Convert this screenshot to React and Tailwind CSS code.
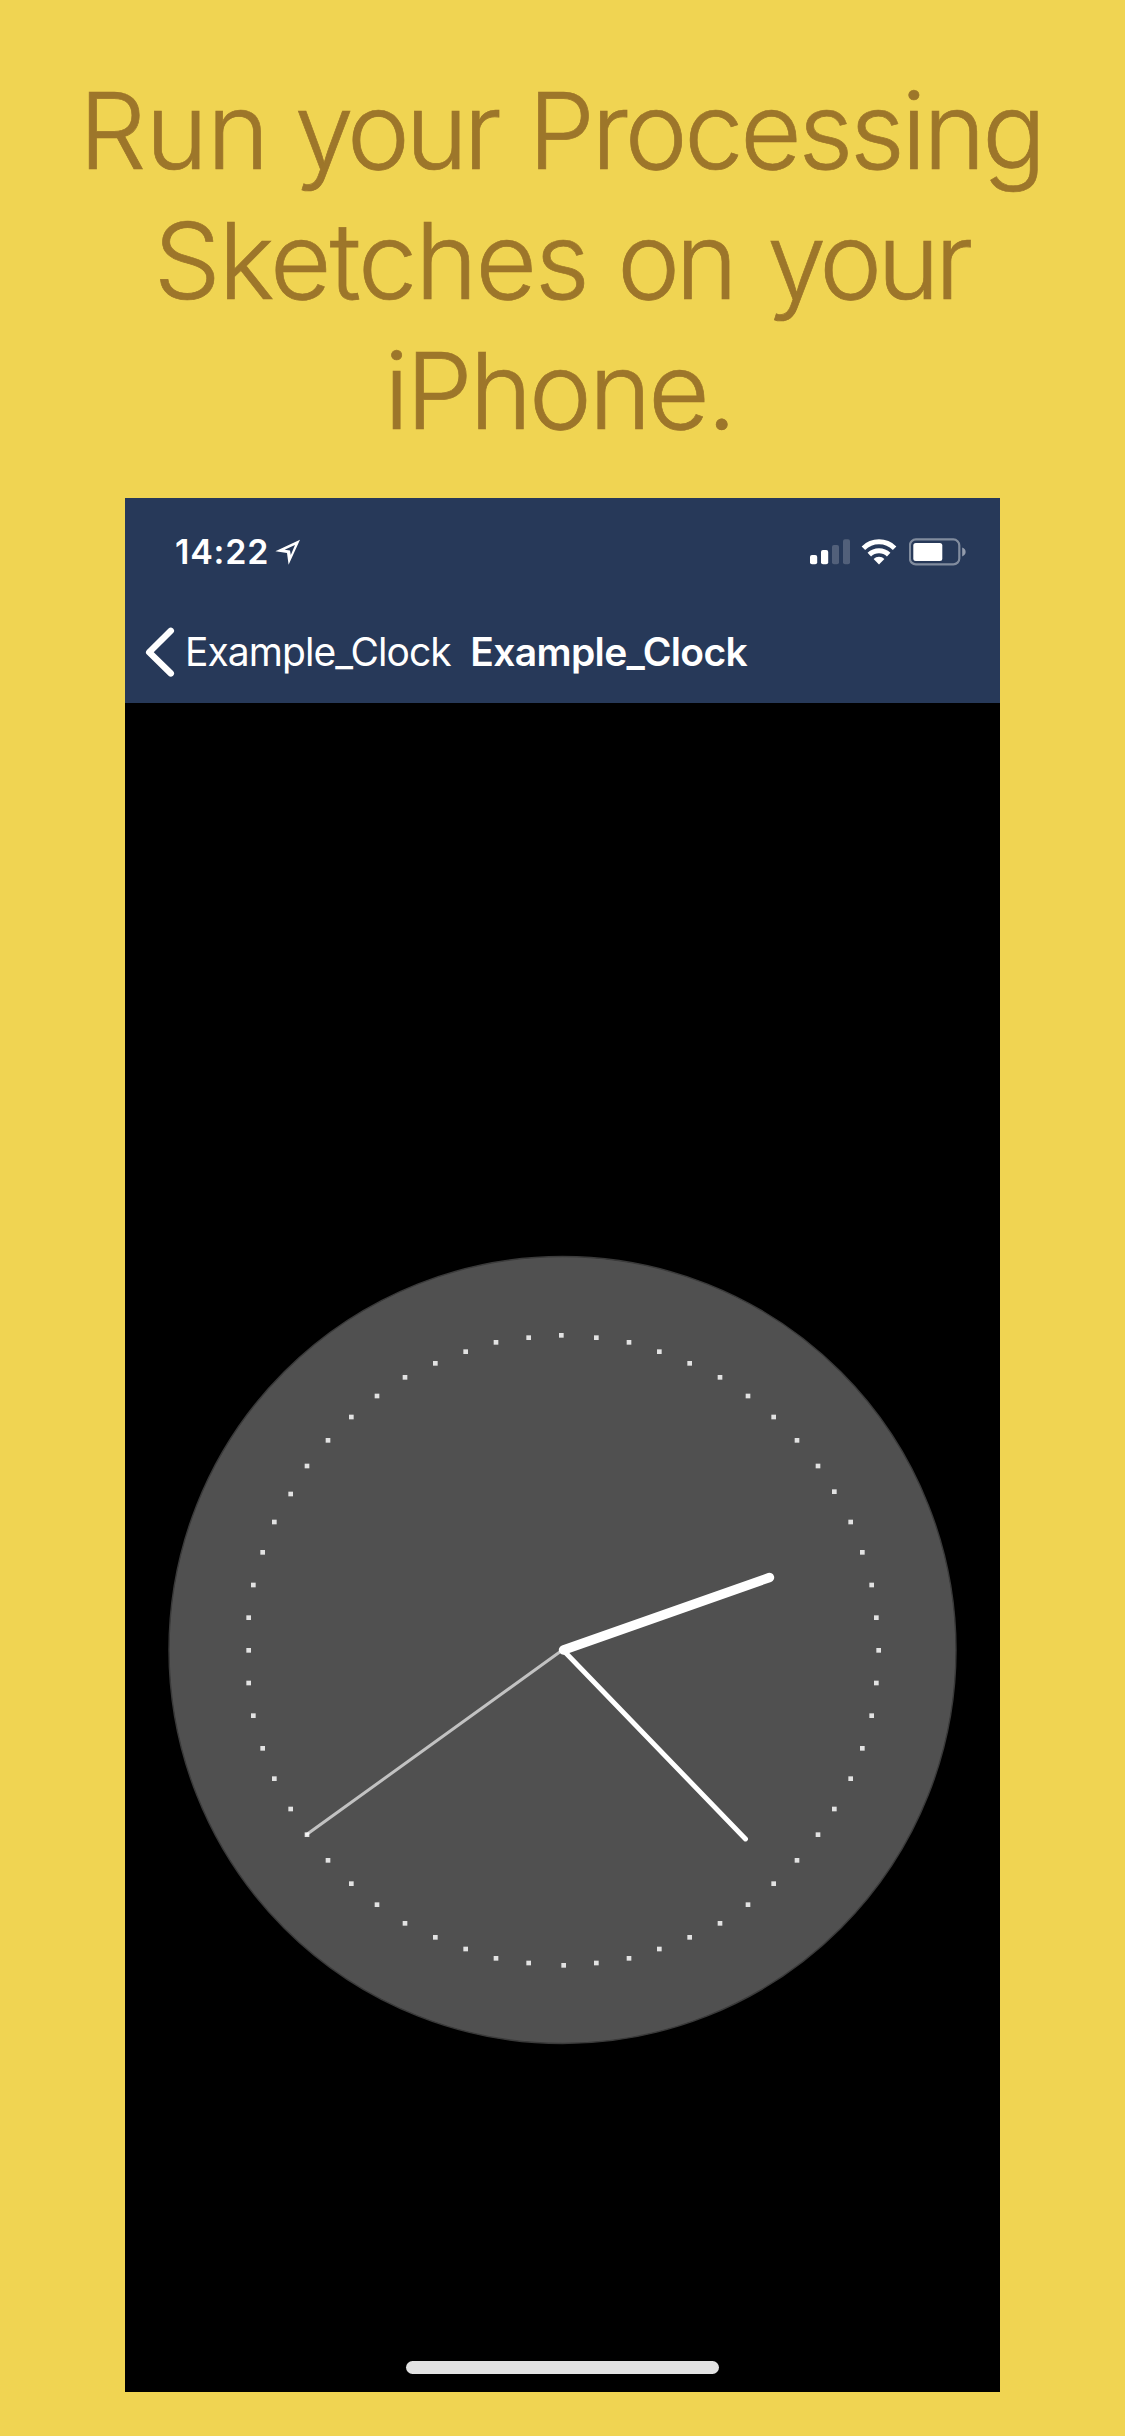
import React from 'react';

// The clock sketch runs on a 375pt wide canvas shown at 7/3 scale.
const UNIT = 7 / 3;
const CX = 187.5;
const CY = 406;

const ticks = Array.from({ length: 60 }, (_, i) => {
  const a = (i * 6 * Math.PI) / 180;
  return {
    x: Math.round(CX + Math.cos(a) * 135),
    y: Math.round(CY + Math.sin(a) * 135),
  };
});

function ClockFace() {
  return (
    <svg className="block h-[1689px] w-[875px]" viewBox="0 0 875 1689">
      <circle cx="437.5" cy="947" r="393.5" fill="#505050" stroke="#3a3a3a" strokeWidth="1.4" />
      {ticks.map((t, i) => (
        <rect
          key={i}
          x={t.x * UNIT - 2.33}
          y={t.y * UNIT - 2.33}
          width="4.67"
          height="4.67"
          fill="#e2e2e2"
        />
      ))}
      <g stroke="#fff" strokeLinecap="round">
        <line x1="437.5" y1="947" x2="182" y2="1131.3" strokeWidth="3" strokeOpacity="0.65" />
        <line x1="438" y1="947" x2="620.5" y2="1136" strokeWidth="4.9" />
        <line x1="438.5" y1="947" x2="644.5" y2="874.5" strokeWidth="9.4" />
      </g>
    </svg>
  );
}

function LocationIcon() {
  return (
    <svg className="ml-[6px] h-[26px] w-[26px]" viewBox="0 0 26 26">
      <path
        fillRule="evenodd"
        fill="#fff"
        d="M25 0.7 L13.6 25.8 L12 13.9 L0.4 12.2 Z M20 6 L9.6 10.7 L15 11.4 L15.8 16 Z"
      />
    </svg>
  );
}

function SignalIcon() {
  return (
    <svg className="h-[26px] w-[40px]" viewBox="0 0 40 26" fill="#fff">
      <rect x="0" y="16" width="7.2" height="9.3" rx="2" />
      <rect x="11" y="11" width="7.2" height="14.3" rx="2" />
      <rect x="22" y="6" width="7" height="19.3" rx="2" opacity="0.2" />
      <rect x="33" y="0.3" width="7" height="25" rx="2" opacity="0.2" />
    </svg>
  );
}

function WifiIcon() {
  return (
    <svg className="ml-[11px] h-[26px] w-[36px]" viewBox="0 0 36 26">
      <g fill="none" stroke="#fff" strokeWidth="5">
        <path d="M2.4 9.2 A22.3 22.3 0 0 1 33.6 9.2" />
        <path d="M8.3 15.6 A13.9 13.9 0 0 1 27.7 15.6" />
      </g>
      <path fill="#fff" d="M18 25.5 L12.6 20 A7.6 7.6 0 0 1 23.4 20 Z" />
    </svg>
  );
}

function BatteryIcon() {
  return (
    <svg className="ml-[12px] h-[28px] w-[58px]" viewBox="0 0 58 28">
      <rect x="0.9" y="1.4" width="49.4" height="25" rx="6" fill="none" stroke="#fff" strokeOpacity="0.42" strokeWidth="2.2" />
      <rect x="4.3" y="5" width="29" height="18" rx="2.5" fill="#fff" />
      <path d="M53.2 9.6 C57.8 11 57.8 17 53.2 18.4 Z" fill="#fff" fillOpacity="0.5" />
    </svg>
  );
}

function StatusBar() {
  return (
    <div className="flex h-[107px] items-center pr-[33px] pl-[50px]">
      <span className="text-[34px] leading-[107px] font-semibold tracking-[0.8px]">14:22</span>
      <LocationIcon />
      <div className="ml-auto flex items-center">
        <SignalIcon />
        <WifiIcon />
        <BatteryIcon />
      </div>
    </div>
  );
}

function NavBar() {
  return (
    <div className="flex h-[94px] items-center pl-[20px] text-[39px] leading-[94px] whitespace-nowrap">
      <svg className="h-[50px] w-[30px]" viewBox="0 0 30 50">
        <path
          d="M25.8 3.8 L4.2 25.3 L25.8 46.4"
          fill="none"
          stroke="#fff"
          strokeWidth="6.4"
          strokeLinecap="round"
          strokeLinejoin="round"
        />
      </svg>
      <span className="ml-[10px] tracking-[-0.95px]">Example_Clock</span>
      <span className="ml-[19.5px] font-semibold tracking-[-0.65px]">Example_Clock</span>
    </div>
  );
}

export default function App() {
  return (
    <div className="flex h-[2436px] w-[1125px] flex-col items-center overflow-hidden bg-[#f0d452] font-['Inter',sans-serif]">
      <h1 className="flex flex-col items-center pt-[66px] text-[106px] leading-[130px] font-light whitespace-nowrap text-[#9d762a] [-webkit-text-stroke:0.7px_#9d762a]">
        <span className="mr-[3px]">
          <span className="tracking-[-0.8px] [word-spacing:-3px]">Run </span>
          <span className="tracking-[-4.4px] [word-spacing:5.5px]">your </span>
          <span className="tracking-[-3.2px]">Processing</span>
        </span>
        <span className="mr-[3px]">
          <span className="tracking-[-2.1px] [word-spacing:2px]">Sketches </span>
          <span className="tracking-[-4.5px] [word-spacing:8.5px]">on </span>
          <span className="tracking-[-4.8px]">your</span>
        </span>
        <span className="mr-[7px] tracking-[-3px]">iPhone.</span>
      </h1>
      <main className="relative mt-[42px] h-[1894px] w-[875px] bg-black text-white">
        <header className="h-[205px] bg-[#273959]">
          <StatusBar />
          <NavBar />
        </header>
        <ClockFace />
        <div className="absolute bottom-[18.5px] left-[281px] h-[12.5px] w-[313px] rounded-full bg-[#e2e2e2]" />
      </main>
    </div>
  );
}
